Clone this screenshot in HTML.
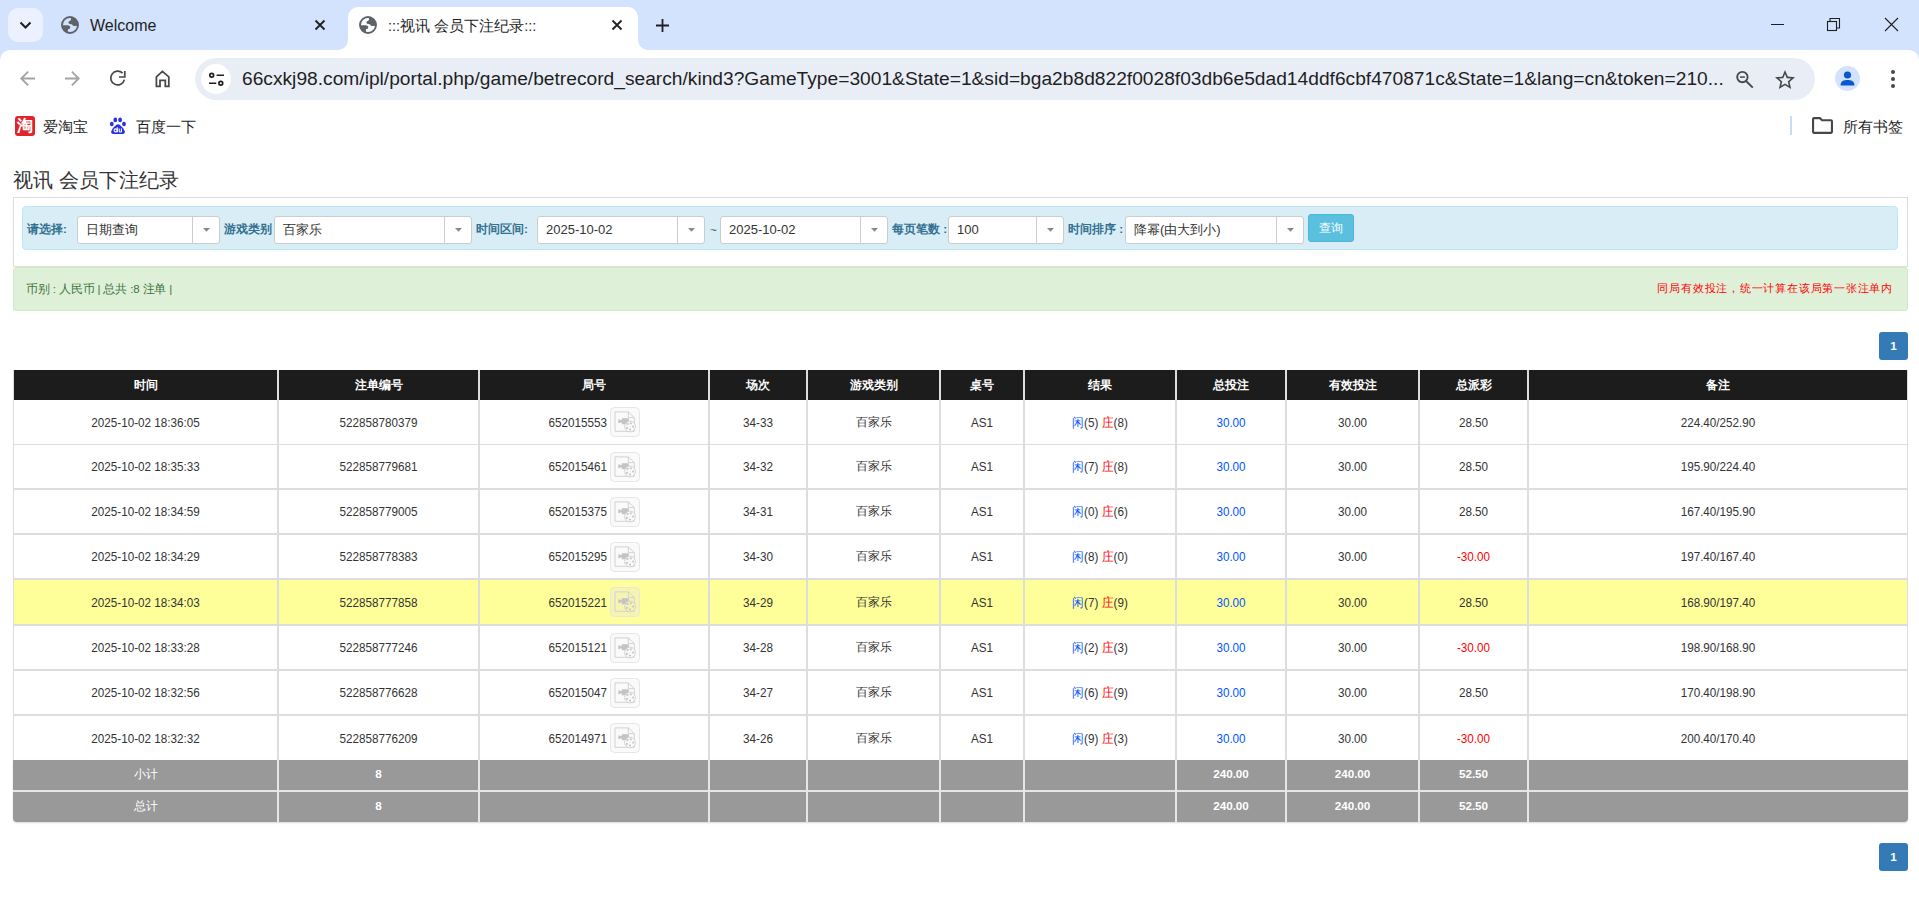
<!DOCTYPE html><html><head><meta charset="utf-8"><style>
*{box-sizing:border-box;margin:0;padding:0}
html,body{width:1919px;height:901px;overflow:hidden;background:#fff;font-family:'Liberation Sans',sans-serif;}
.a{position:absolute}
.t{position:absolute;white-space:nowrap;line-height:1}
svg{position:absolute;overflow:visible}
</style></head><body><div class="a" style="left:0;top:0;width:1919px;height:62px;background:#d3e3fd"></div>
<div class="a" style="left:8px;top:8px;width:35px;height:34px;border-radius:10px;background:#ebf1fe"></div>
<svg style="left:19px;top:18.5px" width="13" height="12" viewBox="0 0 13 12"><path d="M1.5 3.5l5 5 5-5" fill="none" stroke="#1f1f1f" stroke-width="2"/></svg>
<svg style="left:58px;top:13px" width="24" height="24" viewBox="0 0 24 24"><defs><clipPath id="gc61"><circle cx="12" cy="12" r="8.2"/></clipPath></defs><circle cx="12" cy="12" r="8" fill="none" stroke="#5f6368" stroke-width="1.9"/><g clip-path="url(#gc61)" fill="#5f6368"><path d="M13 2 L13 6.3 Q13 7.4 12 7.8 L11.2 8.2 Q10.3 8.7 10.5 9.8 Q10.8 10.9 12 11.1 L13.4 11.3 Q14.5 11.6 14.7 12.3 Q15 13.1 16.2 13 L22 12.6 L22 2 Z"/><path d="M2 12.1 L10 12.3 Q11.6 12.5 12.1 13.6 Q12.5 14.7 11.8 15.4 Q11.3 15.9 10.6 16 Q9.9 16.1 9.9 17.1 L9.9 22 L2 22 Z"/></g></svg>
<div class="t" style="left:90px;top:18px;font-size:16px;color:#1f1f1f">Welcome</div>
<svg style="left:315px;top:20px" width="10" height="10" viewBox="0 0 10 10"><path d="M0.5 0.5l9 9M9.5 0.5l-9 9" stroke="#1f1f1f" stroke-width="1.8"/></svg>
<div class="a" style="left:348px;top:7px;width:290px;height:43px;background:#fff;border-radius:10px 10px 0 0"></div>
<svg style="left:338px;top:40px" width="10" height="10" viewBox="0 0 10 10"><path d="M10 0 V10 H0 A10 10 0 0 0 10 0z" fill="#fff"/></svg>
<svg style="left:638px;top:40px" width="10" height="10" viewBox="0 0 10 10"><path d="M0 0 V10 H10 A10 10 0 0 1 0 0z" fill="#fff"/></svg>
<svg style="left:356px;top:13px" width="24" height="24" viewBox="0 0 24 24"><defs><clipPath id="gc359"><circle cx="12" cy="12" r="8.2"/></clipPath></defs><circle cx="12" cy="12" r="8" fill="none" stroke="#5f6368" stroke-width="1.9"/><g clip-path="url(#gc359)" fill="#5f6368"><path d="M13 2 L13 6.3 Q13 7.4 12 7.8 L11.2 8.2 Q10.3 8.7 10.5 9.8 Q10.8 10.9 12 11.1 L13.4 11.3 Q14.5 11.6 14.7 12.3 Q15 13.1 16.2 13 L22 12.6 L22 2 Z"/><path d="M2 12.1 L10 12.3 Q11.6 12.5 12.1 13.6 Q12.5 14.7 11.8 15.4 Q11.3 15.9 10.6 16 Q9.9 16.1 9.9 17.1 L9.9 22 L2 22 Z"/></g></svg>
<div class="t" style="left:388px;top:19px;font-size:14.6px;color:#1f1f1f">:::视讯 会员下注纪录:::</div>
<svg style="left:612px;top:20px" width="10" height="10" viewBox="0 0 10 10"><path d="M0.5 0.5l9 9M9.5 0.5l-9 9" stroke="#1f1f1f" stroke-width="1.8"/></svg>
<svg style="left:656px;top:19px" width="13" height="13" viewBox="0 0 13 13"><path d="M6.5 0v13M0 6.5h13" stroke="#1f1f1f" stroke-width="1.8"/></svg>
<div class="a" style="left:1771px;top:24px;width:13px;height:1px;background:#1f1f1f"></div>
<svg style="left:1827px;top:18px" width="13" height="13" viewBox="0 0 13 13"><rect x="0.5" y="3.5" width="9" height="9" fill="none" stroke="#1f1f1f" stroke-width="1.1"/><path d="M3 3.5V0.5H12.5V10H9.5" fill="none" stroke="#1f1f1f" stroke-width="1.1"/></svg>
<svg style="left:1885px;top:18px" width="13" height="13" viewBox="0 0 13 13"><path d="M0 0l13 13M13 0l-13 13" stroke="#1f1f1f" stroke-width="1.1"/></svg>
<div class="a" style="left:0;top:50px;width:1919px;height:57px;background:#fff;border-radius:10px 10px 0 0"></div>
<svg style="left:20px;top:71.4px" width="15" height="15" viewBox="4 4 16 16"><path fill="#a3a3a3" d="M20 11H7.83l5.59-5.59L12 4l-8 8 8 8 1.41-1.41L7.83 13H20v-2z"/></svg>
<svg style="left:65px;top:71.4px" width="15" height="15" viewBox="4 4 16 16"><path fill="#a3a3a3" d="M12 4l-1.41 1.41L16.17 11H4v2h12.17l-5.58 5.59L12 20l8-8z"/></svg>
<svg style="left:100px;top:62px" width="40" height="34" viewBox="100 62 40 34"><path d="M124.4 79.6 A6.9 6.9 0 1 1 122.6 73.2" fill="none" stroke="#474747" stroke-width="1.7"/><path d="M124.8 71 V77 H119" fill="none" stroke="#474747" stroke-width="1.7"/></svg>
<svg style="left:140px;top:62px" width="40" height="34" viewBox="140 62 40 34"><path d="M156.4 86.3 V76.8 L162.4 71.4 L168.8 76.8 V86.3 H165.3 V80.4 H160 V86.3 Z" fill="none" stroke="#474747" stroke-width="1.75" stroke-linejoin="miter"/></svg>
<div class="a" style="left:195px;top:58px;width:1620px;height:42px;border-radius:21px;background:#e9eef6"></div>
<div class="a" style="left:201px;top:64px;width:30px;height:30px;border-radius:15px;background:#fff"></div>
<svg style="left:200px;top:62px" width="40" height="34" viewBox="200 62 40 34"><circle cx="211.7" cy="75.3" r="1.9" fill="none" stroke="#1f1f1f" stroke-width="1.7"/><path d="M216.6 75.3H224M209 83.3H216.3" stroke="#1f1f1f" stroke-width="1.6"/><circle cx="220.8" cy="83.3" r="1.9" fill="none" stroke="#1f1f1f" stroke-width="1.7"/></svg>
<div class="t" style="left:242px;top:69px;font-size:19.2px;color:#1f1f1f">66cxkj98.com/ipl/portal.php/game/betrecord_search/kind3?GameType=3001&amp;State=1&amp;sid=bga2b8d822f0028f03db6e5dad14ddf6cbf470871c&amp;State=1&amp;lang=cn&amp;token=210...</div>
<svg style="left:1728px;top:64px" width="30" height="30" viewBox="1728 64 30 30"><circle cx="1742.4" cy="77.1" r="5.2" fill="none" stroke="#474747" stroke-width="1.9"/><path d="M1740 77.1H1744.9" stroke="#474747" stroke-width="1.5"/><path d="M1746.3 81.3L1752.8 87.6" stroke="#474747" stroke-width="1.9"/></svg>
<svg style="left:1772.9px;top:68px" width="24" height="24" viewBox="0 0 24 24"><path fill="#474747" d="M22 9.24l-7.19-.62L12 2 9.19 8.63 2 9.24l5.46 4.73L5.82 21 12 17.27 18.18 21l-1.63-7.03L22 9.24zM12 15.4l-3.76 2.27 1-4.28-3.32-2.88 4.38-.38L12 6.1l1.71 4.04 4.38.38-3.32 2.88 1 4.28L12 15.4z"/></svg>
<div class="a" style="left:1835px;top:66px;width:25px;height:25px;border-radius:13px;background:#d3e3fd"></div>
<svg style="left:1839px;top:70px" width="17" height="17" viewBox="0 0 17 17"><circle cx="8.5" cy="5" r="3.6" fill="#0b57d0"/><path d="M1.5 15.5 C1.5 11 5 10 8.5 10 C12 10 15.5 11 15.5 15.5 Z" fill="#0b57d0"/></svg>
<div class="a" style="left:1890.5px;top:70px;width:4px;height:4px;border-radius:2px;background:#474747"></div>
<div class="a" style="left:1890.5px;top:76.7px;width:4px;height:4px;border-radius:2px;background:#474747"></div>
<div class="a" style="left:1890.5px;top:83.6px;width:4px;height:4px;border-radius:2px;background:#474747"></div>
<div class="a" style="left:15px;top:116px;width:20px;height:20px;border-radius:3px;background:#e0242b"></div>
<div class="t" style="left:16px;top:118px;width:18px;text-align:center;font-size:16px;font-weight:bold;color:#fff">淘</div>
<div class="t" style="left:43px;top:120px;font-size:14.5px;color:#1f1f1f">爱淘宝</div>
<svg style="left:104px;top:112px" width="28" height="28" viewBox="0 0 28 28"><g fill="#2932e1"><ellipse cx="11.3" cy="7.9" rx="1.9" ry="2.3"/><ellipse cx="16.1" cy="7.9" rx="1.9" ry="2.3"/><ellipse cx="7.8" cy="12" rx="1.9" ry="2.2"/><ellipse cx="20" cy="12" rx="1.9" ry="2.2"/><path d="M7.2 19.6 Q6.8 21.9 9.4 21.9 L18.6 21.9 Q21.2 21.9 20.8 19.6 Q19.2 15.2 15.6 12.8 Q14 11.9 12.4 12.8 Q8.8 15.2 7.2 19.6Z"/></g><g fill="none" stroke="#fff" stroke-width="1.1"><circle cx="11.6" cy="18.4" r="1.5"/><path d="M13.3 15.3V20.2M15.2 16.6V18.9Q15.2 20 16.3 20Q17.4 20 17.4 18.9V16.6M17.4 18.5V20.2"/></g></svg>
<div class="t" style="left:136px;top:120px;font-size:14.5px;color:#1f1f1f">百度一下</div>
<div class="a" style="left:1790px;top:116px;width:2px;height:19px;background:#c9dbfb"></div>
<svg style="left:1812px;top:117px" width="21" height="17" viewBox="2 4 20 16"><path fill="#474747" d="M9.17 6l2 2H20v10H4V6h5.17M10 4H4c-1.1 0-1.99.9-1.99 2L2 18c0 1.1.9 2 2 2h16c1.1 0 2-.9 2-2V8c0-1.1-.9-2-2-2h-8l-2-2z"/></svg>
<div class="t" style="left:1843px;top:120px;font-size:14.5px;color:#1f1f1f">所有书签</div>
<div class="t" style="left:13px;top:169.5px;font-size:20px;color:#333">视讯 会员下注纪录</div>
<div class="a" style="left:13px;top:197px;width:1895px;height:70px;border:1px solid #ddd;background:#fff"></div>
<div class="a" style="left:22px;top:206px;width:1876px;height:44px;border:1px solid #bce8f1;border-radius:4px;background:#d9edf7"></div>
<div class="t" style="left:27px;top:223px;color:#31708f;font-weight:bold;font-size:11.7px;">请选择:</div>
<div class="a" style="left:77px;top:216px;width:143px;height:28px;border:1px solid #ccc;border-radius:3px;background:#fff"></div>
<div class="a" style="left:192px;top:217px;width:1px;height:26px;background:#ccc"></div>
<div class="t" style="left:86px;top:223px;font-size:13px;color:#333">日期查询</div>
<svg style="left:202.5px;top:228px" width="7" height="5" viewBox="0 0 7 5"><path d="M0 0h7L3.5 3.8z" fill="#888"/></svg>
<div class="t" style="left:224px;top:223px;color:#31708f;font-weight:bold;font-size:11.7px;">游戏类别</div>
<div class="a" style="left:274px;top:216px;width:198px;height:28px;border:1px solid #ccc;border-radius:3px;background:#fff"></div>
<div class="a" style="left:444px;top:217px;width:1px;height:26px;background:#ccc"></div>
<div class="t" style="left:283px;top:223px;font-size:13px;color:#333">百家乐</div>
<svg style="left:454.5px;top:228px" width="7" height="5" viewBox="0 0 7 5"><path d="M0 0h7L3.5 3.8z" fill="#888"/></svg>
<div class="t" style="left:476px;top:223px;color:#31708f;font-weight:bold;font-size:11.7px;">时间区间:</div>
<div class="a" style="left:537px;top:216px;width:168px;height:28px;border:1px solid #ccc;border-radius:3px;background:#fff"></div>
<div class="a" style="left:677px;top:217px;width:1px;height:26px;background:#ccc"></div>
<div class="t" style="left:546px;top:223px;font-size:13px;color:#333">2025-10-02</div>
<svg style="left:687.5px;top:228px" width="7" height="5" viewBox="0 0 7 5"><path d="M0 0h7L3.5 3.8z" fill="#888"/></svg>
<div class="t" style="left:710px;top:224px;font-size:11.7px;color:#555">~</div>
<div class="a" style="left:720px;top:216px;width:168px;height:28px;border:1px solid #ccc;border-radius:3px;background:#fff"></div>
<div class="a" style="left:860px;top:217px;width:1px;height:26px;background:#ccc"></div>
<div class="t" style="left:729px;top:223px;font-size:13px;color:#333">2025-10-02</div>
<svg style="left:870.5px;top:228px" width="7" height="5" viewBox="0 0 7 5"><path d="M0 0h7L3.5 3.8z" fill="#888"/></svg>
<div class="t" style="left:892px;top:223px;color:#31708f;font-weight:bold;font-size:11.7px;">每页笔数 :</div>
<div class="a" style="left:948px;top:216px;width:116px;height:28px;border:1px solid #ccc;border-radius:3px;background:#fff"></div>
<div class="a" style="left:1036px;top:217px;width:1px;height:26px;background:#ccc"></div>
<div class="t" style="left:957px;top:223px;font-size:13px;color:#333">100</div>
<svg style="left:1046.5px;top:228px" width="7" height="5" viewBox="0 0 7 5"><path d="M0 0h7L3.5 3.8z" fill="#888"/></svg>
<div class="t" style="left:1068px;top:223px;color:#31708f;font-weight:bold;font-size:11.7px;">时间排序 :</div>
<div class="a" style="left:1125px;top:216px;width:179px;height:28px;border:1px solid #ccc;border-radius:3px;background:#fff"></div>
<div class="a" style="left:1276px;top:217px;width:1px;height:26px;background:#ccc"></div>
<div class="t" style="left:1134px;top:223px;font-size:13px;color:#333">降幂(由大到小)</div>
<svg style="left:1286.5px;top:228px" width="7" height="5" viewBox="0 0 7 5"><path d="M0 0h7L3.5 3.8z" fill="#888"/></svg>
<div class="a" style="left:1308px;top:214px;width:46px;height:28px;border:1px solid #46b8da;border-radius:3px;background:#5bc0de"></div>
<div class="t" style="left:1319px;top:222px;font-size:11.7px;color:#fff">查询</div>
<div class="a" style="left:13px;top:267px;width:1895px;height:44px;border:1px solid #d6e9c6;border-radius:3px;background:#dff0d8"></div>
<div class="t" style="left:26px;top:284px;font-size:11.5px;letter-spacing:-0.14px;color:#3c763d">币别 : 人民币 | 总共 :8 注单 |</div>
<div class="t" style="right:26px;top:283px;font-size:11px;letter-spacing:0.78px;color:#ff0000">同局有效投注，统一计算在该局第一张注单内</div>
<div class="a" style="left:1879px;top:332px;width:29px;height:28px;border-radius:3px;background:#337ab7"></div>
<div class="t" style="left:1879px;top:340px;width:29px;text-align:center;font-size:11.7px;font-weight:bold;color:#fff">1</div>
<div class="a" style="left:1879px;top:843px;width:29px;height:28px;border-radius:3px;background:#337ab7"></div>
<div class="t" style="left:1879px;top:851px;width:29px;text-align:center;font-size:11.7px;font-weight:bold;color:#fff">1</div>
<div class="a" style="left:13px;top:370px;width:1895px;height:390px;background:#ddd"></div>
<div class="a" style="left:14px;top:370px;width:263px;height:30px;background:#1c1c1c"></div>
<div class="t" style="left:14px;top:379px;width:263px;text-align:center;font-size:11.7px;font-weight:bold;color:#fff">时间</div>
<div class="a" style="left:279px;top:370px;width:199px;height:30px;background:#1c1c1c"></div>
<div class="t" style="left:279px;top:379px;width:199px;text-align:center;font-size:11.7px;font-weight:bold;color:#fff">注单编号</div>
<div class="a" style="left:480px;top:370px;width:228px;height:30px;background:#1c1c1c"></div>
<div class="t" style="left:480px;top:379px;width:228px;text-align:center;font-size:11.7px;font-weight:bold;color:#fff">局号</div>
<div class="a" style="left:710px;top:370px;width:96px;height:30px;background:#1c1c1c"></div>
<div class="t" style="left:710px;top:379px;width:96px;text-align:center;font-size:11.7px;font-weight:bold;color:#fff">场次</div>
<div class="a" style="left:808px;top:370px;width:131px;height:30px;background:#1c1c1c"></div>
<div class="t" style="left:808px;top:379px;width:131px;text-align:center;font-size:11.7px;font-weight:bold;color:#fff">游戏类别</div>
<div class="a" style="left:941px;top:370px;width:82px;height:30px;background:#1c1c1c"></div>
<div class="t" style="left:941px;top:379px;width:82px;text-align:center;font-size:11.7px;font-weight:bold;color:#fff">桌号</div>
<div class="a" style="left:1025px;top:370px;width:150px;height:30px;background:#1c1c1c"></div>
<div class="t" style="left:1025px;top:379px;width:150px;text-align:center;font-size:11.7px;font-weight:bold;color:#fff">结果</div>
<div class="a" style="left:1177px;top:370px;width:108px;height:30px;background:#1c1c1c"></div>
<div class="t" style="left:1177px;top:379px;width:108px;text-align:center;font-size:11.7px;font-weight:bold;color:#fff">总投注</div>
<div class="a" style="left:1287px;top:370px;width:131px;height:30px;background:#1c1c1c"></div>
<div class="t" style="left:1287px;top:379px;width:131px;text-align:center;font-size:11.7px;font-weight:bold;color:#fff">有效投注</div>
<div class="a" style="left:1420px;top:370px;width:107px;height:30px;background:#1c1c1c"></div>
<div class="t" style="left:1420px;top:379px;width:107px;text-align:center;font-size:11.7px;font-weight:bold;color:#fff">总派彩</div>
<div class="a" style="left:1529px;top:370px;width:378px;height:30px;background:#1c1c1c"></div>
<div class="t" style="left:1529px;top:379px;width:378px;text-align:center;font-size:11.7px;font-weight:bold;color:#fff">备注</div>
<div class="a" style="left:14px;top:400px;width:263px;height:44px;background:#fff"></div>
<div class="t" style="left:14px;top:415.5px;width:263px;text-align:center;font-size:11.7px;transform:translateY(0.4px) scaleY(1.12);transform-origin:50% 60%;color:#333">2025-10-02 18:36:05</div>
<div class="a" style="left:279px;top:400px;width:199px;height:44px;background:#fff"></div>
<div class="t" style="left:279px;top:415.5px;width:199px;text-align:center;font-size:11.7px;transform:translateY(0.4px) scaleY(1.12);transform-origin:50% 60%;color:#333">522858780379</div>
<div class="a" style="left:480px;top:400px;width:228px;height:44px;background:#fff"></div>
<div class="t" style="left:480px;width:127px;text-align:right;top:415.5px;font-size:11.7px;transform:translateY(0.4px) scaleY(1.12);transform-origin:50% 60%;color:#333">652015553</div>
<svg style="left:610px;top:407px" width="30" height="30" viewBox="0 0 30 30"><rect x="0.5" y="0.5" width="29" height="29" rx="4" fill="#fafafa" stroke="#e6e6e6"/><path d="M5 4.9H18.3L24.3 10.6V24.3H5Z" fill="none" stroke="#d2d2d2" stroke-width="1"/><path d="M18.3 4.9V10.6H24.3" fill="none" stroke="#d2d2d2" stroke-width="1"/><path d="M8.3 12.3L11.8 13.2V11.3H18.8V17.3H11.8V15.3L8.3 16.3Z" fill="#c4c4c4"/><circle cx="20" cy="19.5" r="5.4" fill="#fafafa" stroke="#cfcfcf" stroke-width="0.9"/><g fill="#c8c8c8"><circle cx="17.5" cy="17" r="1.15"/><circle cx="20.8" cy="16.3" r="1.15"/><circle cx="23.1" cy="19.6" r="1.15"/><circle cx="16.9" cy="21" r="1.15"/><circle cx="20" cy="22.6" r="1.15"/><circle cx="20" cy="19.5" r="0.4"/></g></svg>
<div class="a" style="left:710px;top:400px;width:96px;height:44px;background:#fff"></div>
<div class="t" style="left:710px;top:415.5px;width:96px;text-align:center;font-size:11.7px;transform:translateY(0.4px) scaleY(1.12);transform-origin:50% 60%;color:#333">34-33</div>
<div class="a" style="left:808px;top:400px;width:131px;height:44px;background:#fff"></div>
<div class="t" style="left:808px;top:415.5px;width:131px;text-align:center;font-size:11.7px;color:#333">百家乐</div>
<div class="a" style="left:941px;top:400px;width:82px;height:44px;background:#fff"></div>
<div class="t" style="left:941px;top:415.5px;width:82px;text-align:center;font-size:11.7px;transform:translateY(0.4px) scaleY(1.12);transform-origin:50% 60%;color:#333">AS1</div>
<div class="a" style="left:1025px;top:400px;width:150px;height:44px;background:#fff"></div>
<div class="t" style="left:1025px;top:415.5px;width:150px;text-align:center;font-size:11.7px;transform:translateY(0.4px) scaleY(1.12);transform-origin:50% 60%;color:#333"><span style="color:#0055ff">闲</span>(5) <span style="color:#ff0000">庄</span>(8)</div>
<div class="a" style="left:1177px;top:400px;width:108px;height:44px;background:#fff"></div>
<div class="t" style="left:1177px;top:415.5px;width:108px;text-align:center;font-size:11.7px;transform:translateY(0.4px) scaleY(1.12);transform-origin:50% 60%;color:#0055ff">30.00</div>
<div class="a" style="left:1287px;top:400px;width:131px;height:44px;background:#fff"></div>
<div class="t" style="left:1287px;top:415.5px;width:131px;text-align:center;font-size:11.7px;transform:translateY(0.4px) scaleY(1.12);transform-origin:50% 60%;color:#333">30.00</div>
<div class="a" style="left:1420px;top:400px;width:107px;height:44px;background:#fff"></div>
<div class="t" style="left:1420px;top:415.5px;width:107px;text-align:center;font-size:11.7px;transform:translateY(0.4px) scaleY(1.12);transform-origin:50% 60%;color:#333">28.50</div>
<div class="a" style="left:1529px;top:400px;width:378px;height:44px;background:#fff"></div>
<div class="t" style="left:1529px;top:415.5px;width:378px;text-align:center;font-size:11.7px;transform:translateY(0.4px) scaleY(1.12);transform-origin:50% 60%;color:#333">224.40/252.90</div>
<div class="a" style="left:14px;top:445px;width:263px;height:43px;background:#fff"></div>
<div class="t" style="left:14px;top:460.0px;width:263px;text-align:center;font-size:11.7px;transform:translateY(0.4px) scaleY(1.12);transform-origin:50% 60%;color:#333">2025-10-02 18:35:33</div>
<div class="a" style="left:279px;top:445px;width:199px;height:43px;background:#fff"></div>
<div class="t" style="left:279px;top:460.0px;width:199px;text-align:center;font-size:11.7px;transform:translateY(0.4px) scaleY(1.12);transform-origin:50% 60%;color:#333">522858779681</div>
<div class="a" style="left:480px;top:445px;width:228px;height:43px;background:#fff"></div>
<div class="t" style="left:480px;width:127px;text-align:right;top:460.0px;font-size:11.7px;transform:translateY(0.4px) scaleY(1.12);transform-origin:50% 60%;color:#333">652015461</div>
<svg style="left:610px;top:452px" width="30" height="30" viewBox="0 0 30 30"><rect x="0.5" y="0.5" width="29" height="29" rx="4" fill="#fafafa" stroke="#e6e6e6"/><path d="M5 4.9H18.3L24.3 10.6V24.3H5Z" fill="none" stroke="#d2d2d2" stroke-width="1"/><path d="M18.3 4.9V10.6H24.3" fill="none" stroke="#d2d2d2" stroke-width="1"/><path d="M8.3 12.3L11.8 13.2V11.3H18.8V17.3H11.8V15.3L8.3 16.3Z" fill="#c4c4c4"/><circle cx="20" cy="19.5" r="5.4" fill="#fafafa" stroke="#cfcfcf" stroke-width="0.9"/><g fill="#c8c8c8"><circle cx="17.5" cy="17" r="1.15"/><circle cx="20.8" cy="16.3" r="1.15"/><circle cx="23.1" cy="19.6" r="1.15"/><circle cx="16.9" cy="21" r="1.15"/><circle cx="20" cy="22.6" r="1.15"/><circle cx="20" cy="19.5" r="0.4"/></g></svg>
<div class="a" style="left:710px;top:445px;width:96px;height:43px;background:#fff"></div>
<div class="t" style="left:710px;top:460.0px;width:96px;text-align:center;font-size:11.7px;transform:translateY(0.4px) scaleY(1.12);transform-origin:50% 60%;color:#333">34-32</div>
<div class="a" style="left:808px;top:445px;width:131px;height:43px;background:#fff"></div>
<div class="t" style="left:808px;top:460.0px;width:131px;text-align:center;font-size:11.7px;color:#333">百家乐</div>
<div class="a" style="left:941px;top:445px;width:82px;height:43px;background:#fff"></div>
<div class="t" style="left:941px;top:460.0px;width:82px;text-align:center;font-size:11.7px;transform:translateY(0.4px) scaleY(1.12);transform-origin:50% 60%;color:#333">AS1</div>
<div class="a" style="left:1025px;top:445px;width:150px;height:43px;background:#fff"></div>
<div class="t" style="left:1025px;top:460.0px;width:150px;text-align:center;font-size:11.7px;transform:translateY(0.4px) scaleY(1.12);transform-origin:50% 60%;color:#333"><span style="color:#0055ff">闲</span>(7) <span style="color:#ff0000">庄</span>(8)</div>
<div class="a" style="left:1177px;top:445px;width:108px;height:43px;background:#fff"></div>
<div class="t" style="left:1177px;top:460.0px;width:108px;text-align:center;font-size:11.7px;transform:translateY(0.4px) scaleY(1.12);transform-origin:50% 60%;color:#0055ff">30.00</div>
<div class="a" style="left:1287px;top:445px;width:131px;height:43px;background:#fff"></div>
<div class="t" style="left:1287px;top:460.0px;width:131px;text-align:center;font-size:11.7px;transform:translateY(0.4px) scaleY(1.12);transform-origin:50% 60%;color:#333">30.00</div>
<div class="a" style="left:1420px;top:445px;width:107px;height:43px;background:#fff"></div>
<div class="t" style="left:1420px;top:460.0px;width:107px;text-align:center;font-size:11.7px;transform:translateY(0.4px) scaleY(1.12);transform-origin:50% 60%;color:#333">28.50</div>
<div class="a" style="left:1529px;top:445px;width:378px;height:43px;background:#fff"></div>
<div class="t" style="left:1529px;top:460.0px;width:378px;text-align:center;font-size:11.7px;transform:translateY(0.4px) scaleY(1.12);transform-origin:50% 60%;color:#333">195.90/224.40</div>
<div class="a" style="left:14px;top:490px;width:263px;height:43px;background:#fff"></div>
<div class="t" style="left:14px;top:505.0px;width:263px;text-align:center;font-size:11.7px;transform:translateY(0.4px) scaleY(1.12);transform-origin:50% 60%;color:#333">2025-10-02 18:34:59</div>
<div class="a" style="left:279px;top:490px;width:199px;height:43px;background:#fff"></div>
<div class="t" style="left:279px;top:505.0px;width:199px;text-align:center;font-size:11.7px;transform:translateY(0.4px) scaleY(1.12);transform-origin:50% 60%;color:#333">522858779005</div>
<div class="a" style="left:480px;top:490px;width:228px;height:43px;background:#fff"></div>
<div class="t" style="left:480px;width:127px;text-align:right;top:505.0px;font-size:11.7px;transform:translateY(0.4px) scaleY(1.12);transform-origin:50% 60%;color:#333">652015375</div>
<svg style="left:610px;top:497px" width="30" height="30" viewBox="0 0 30 30"><rect x="0.5" y="0.5" width="29" height="29" rx="4" fill="#fafafa" stroke="#e6e6e6"/><path d="M5 4.9H18.3L24.3 10.6V24.3H5Z" fill="none" stroke="#d2d2d2" stroke-width="1"/><path d="M18.3 4.9V10.6H24.3" fill="none" stroke="#d2d2d2" stroke-width="1"/><path d="M8.3 12.3L11.8 13.2V11.3H18.8V17.3H11.8V15.3L8.3 16.3Z" fill="#c4c4c4"/><circle cx="20" cy="19.5" r="5.4" fill="#fafafa" stroke="#cfcfcf" stroke-width="0.9"/><g fill="#c8c8c8"><circle cx="17.5" cy="17" r="1.15"/><circle cx="20.8" cy="16.3" r="1.15"/><circle cx="23.1" cy="19.6" r="1.15"/><circle cx="16.9" cy="21" r="1.15"/><circle cx="20" cy="22.6" r="1.15"/><circle cx="20" cy="19.5" r="0.4"/></g></svg>
<div class="a" style="left:710px;top:490px;width:96px;height:43px;background:#fff"></div>
<div class="t" style="left:710px;top:505.0px;width:96px;text-align:center;font-size:11.7px;transform:translateY(0.4px) scaleY(1.12);transform-origin:50% 60%;color:#333">34-31</div>
<div class="a" style="left:808px;top:490px;width:131px;height:43px;background:#fff"></div>
<div class="t" style="left:808px;top:505.0px;width:131px;text-align:center;font-size:11.7px;color:#333">百家乐</div>
<div class="a" style="left:941px;top:490px;width:82px;height:43px;background:#fff"></div>
<div class="t" style="left:941px;top:505.0px;width:82px;text-align:center;font-size:11.7px;transform:translateY(0.4px) scaleY(1.12);transform-origin:50% 60%;color:#333">AS1</div>
<div class="a" style="left:1025px;top:490px;width:150px;height:43px;background:#fff"></div>
<div class="t" style="left:1025px;top:505.0px;width:150px;text-align:center;font-size:11.7px;transform:translateY(0.4px) scaleY(1.12);transform-origin:50% 60%;color:#333"><span style="color:#0055ff">闲</span>(0) <span style="color:#ff0000">庄</span>(6)</div>
<div class="a" style="left:1177px;top:490px;width:108px;height:43px;background:#fff"></div>
<div class="t" style="left:1177px;top:505.0px;width:108px;text-align:center;font-size:11.7px;transform:translateY(0.4px) scaleY(1.12);transform-origin:50% 60%;color:#0055ff">30.00</div>
<div class="a" style="left:1287px;top:490px;width:131px;height:43px;background:#fff"></div>
<div class="t" style="left:1287px;top:505.0px;width:131px;text-align:center;font-size:11.7px;transform:translateY(0.4px) scaleY(1.12);transform-origin:50% 60%;color:#333">30.00</div>
<div class="a" style="left:1420px;top:490px;width:107px;height:43px;background:#fff"></div>
<div class="t" style="left:1420px;top:505.0px;width:107px;text-align:center;font-size:11.7px;transform:translateY(0.4px) scaleY(1.12);transform-origin:50% 60%;color:#333">28.50</div>
<div class="a" style="left:1529px;top:490px;width:378px;height:43px;background:#fff"></div>
<div class="t" style="left:1529px;top:505.0px;width:378px;text-align:center;font-size:11.7px;transform:translateY(0.4px) scaleY(1.12);transform-origin:50% 60%;color:#333">167.40/195.90</div>
<div class="a" style="left:14px;top:535px;width:263px;height:43px;background:#fff"></div>
<div class="t" style="left:14px;top:550.0px;width:263px;text-align:center;font-size:11.7px;transform:translateY(0.4px) scaleY(1.12);transform-origin:50% 60%;color:#333">2025-10-02 18:34:29</div>
<div class="a" style="left:279px;top:535px;width:199px;height:43px;background:#fff"></div>
<div class="t" style="left:279px;top:550.0px;width:199px;text-align:center;font-size:11.7px;transform:translateY(0.4px) scaleY(1.12);transform-origin:50% 60%;color:#333">522858778383</div>
<div class="a" style="left:480px;top:535px;width:228px;height:43px;background:#fff"></div>
<div class="t" style="left:480px;width:127px;text-align:right;top:550.0px;font-size:11.7px;transform:translateY(0.4px) scaleY(1.12);transform-origin:50% 60%;color:#333">652015295</div>
<svg style="left:610px;top:542px" width="30" height="30" viewBox="0 0 30 30"><rect x="0.5" y="0.5" width="29" height="29" rx="4" fill="#fafafa" stroke="#e6e6e6"/><path d="M5 4.9H18.3L24.3 10.6V24.3H5Z" fill="none" stroke="#d2d2d2" stroke-width="1"/><path d="M18.3 4.9V10.6H24.3" fill="none" stroke="#d2d2d2" stroke-width="1"/><path d="M8.3 12.3L11.8 13.2V11.3H18.8V17.3H11.8V15.3L8.3 16.3Z" fill="#c4c4c4"/><circle cx="20" cy="19.5" r="5.4" fill="#fafafa" stroke="#cfcfcf" stroke-width="0.9"/><g fill="#c8c8c8"><circle cx="17.5" cy="17" r="1.15"/><circle cx="20.8" cy="16.3" r="1.15"/><circle cx="23.1" cy="19.6" r="1.15"/><circle cx="16.9" cy="21" r="1.15"/><circle cx="20" cy="22.6" r="1.15"/><circle cx="20" cy="19.5" r="0.4"/></g></svg>
<div class="a" style="left:710px;top:535px;width:96px;height:43px;background:#fff"></div>
<div class="t" style="left:710px;top:550.0px;width:96px;text-align:center;font-size:11.7px;transform:translateY(0.4px) scaleY(1.12);transform-origin:50% 60%;color:#333">34-30</div>
<div class="a" style="left:808px;top:535px;width:131px;height:43px;background:#fff"></div>
<div class="t" style="left:808px;top:550.0px;width:131px;text-align:center;font-size:11.7px;color:#333">百家乐</div>
<div class="a" style="left:941px;top:535px;width:82px;height:43px;background:#fff"></div>
<div class="t" style="left:941px;top:550.0px;width:82px;text-align:center;font-size:11.7px;transform:translateY(0.4px) scaleY(1.12);transform-origin:50% 60%;color:#333">AS1</div>
<div class="a" style="left:1025px;top:535px;width:150px;height:43px;background:#fff"></div>
<div class="t" style="left:1025px;top:550.0px;width:150px;text-align:center;font-size:11.7px;transform:translateY(0.4px) scaleY(1.12);transform-origin:50% 60%;color:#333"><span style="color:#0055ff">闲</span>(8) <span style="color:#ff0000">庄</span>(0)</div>
<div class="a" style="left:1177px;top:535px;width:108px;height:43px;background:#fff"></div>
<div class="t" style="left:1177px;top:550.0px;width:108px;text-align:center;font-size:11.7px;transform:translateY(0.4px) scaleY(1.12);transform-origin:50% 60%;color:#0055ff">30.00</div>
<div class="a" style="left:1287px;top:535px;width:131px;height:43px;background:#fff"></div>
<div class="t" style="left:1287px;top:550.0px;width:131px;text-align:center;font-size:11.7px;transform:translateY(0.4px) scaleY(1.12);transform-origin:50% 60%;color:#333">30.00</div>
<div class="a" style="left:1420px;top:535px;width:107px;height:43px;background:#fff"></div>
<div class="t" style="left:1420px;top:550.0px;width:107px;text-align:center;font-size:11.7px;transform:translateY(0.4px) scaleY(1.12);transform-origin:50% 60%;color:#ff0000">-30.00</div>
<div class="a" style="left:1529px;top:535px;width:378px;height:43px;background:#fff"></div>
<div class="t" style="left:1529px;top:550.0px;width:378px;text-align:center;font-size:11.7px;transform:translateY(0.4px) scaleY(1.12);transform-origin:50% 60%;color:#333">197.40/167.40</div>
<div class="a" style="left:14px;top:580px;width:263px;height:44px;background:#ffff99"></div>
<div class="t" style="left:14px;top:595.5px;width:263px;text-align:center;font-size:11.7px;transform:translateY(0.4px) scaleY(1.12);transform-origin:50% 60%;color:#333">2025-10-02 18:34:03</div>
<div class="a" style="left:279px;top:580px;width:199px;height:44px;background:#ffff99"></div>
<div class="t" style="left:279px;top:595.5px;width:199px;text-align:center;font-size:11.7px;transform:translateY(0.4px) scaleY(1.12);transform-origin:50% 60%;color:#333">522858777858</div>
<div class="a" style="left:480px;top:580px;width:228px;height:44px;background:#ffff99"></div>
<div class="t" style="left:480px;width:127px;text-align:right;top:595.5px;font-size:11.7px;transform:translateY(0.4px) scaleY(1.12);transform-origin:50% 60%;color:#333">652015221</div>
<svg style="left:610px;top:587px" width="30" height="30" viewBox="0 0 30 30"><rect x="0.5" y="0.5" width="29" height="29" rx="4" fill="#f7f3b0" stroke="#e6e6e6"/><path d="M5 4.9H18.3L24.3 10.6V24.3H5Z" fill="none" stroke="#d2d2d2" stroke-width="1"/><path d="M18.3 4.9V10.6H24.3" fill="none" stroke="#d2d2d2" stroke-width="1"/><path d="M8.3 12.3L11.8 13.2V11.3H18.8V17.3H11.8V15.3L8.3 16.3Z" fill="#c4c4c4"/><circle cx="20" cy="19.5" r="5.4" fill="#f7f3b0" stroke="#cfcfcf" stroke-width="0.9"/><g fill="#c8c8c8"><circle cx="17.5" cy="17" r="1.15"/><circle cx="20.8" cy="16.3" r="1.15"/><circle cx="23.1" cy="19.6" r="1.15"/><circle cx="16.9" cy="21" r="1.15"/><circle cx="20" cy="22.6" r="1.15"/><circle cx="20" cy="19.5" r="0.4"/></g></svg>
<div class="a" style="left:710px;top:580px;width:96px;height:44px;background:#ffff99"></div>
<div class="t" style="left:710px;top:595.5px;width:96px;text-align:center;font-size:11.7px;transform:translateY(0.4px) scaleY(1.12);transform-origin:50% 60%;color:#333">34-29</div>
<div class="a" style="left:808px;top:580px;width:131px;height:44px;background:#ffff99"></div>
<div class="t" style="left:808px;top:595.5px;width:131px;text-align:center;font-size:11.7px;color:#333">百家乐</div>
<div class="a" style="left:941px;top:580px;width:82px;height:44px;background:#ffff99"></div>
<div class="t" style="left:941px;top:595.5px;width:82px;text-align:center;font-size:11.7px;transform:translateY(0.4px) scaleY(1.12);transform-origin:50% 60%;color:#333">AS1</div>
<div class="a" style="left:1025px;top:580px;width:150px;height:44px;background:#ffff99"></div>
<div class="t" style="left:1025px;top:595.5px;width:150px;text-align:center;font-size:11.7px;transform:translateY(0.4px) scaleY(1.12);transform-origin:50% 60%;color:#333"><span style="color:#0055ff">闲</span>(7) <span style="color:#ff0000">庄</span>(9)</div>
<div class="a" style="left:1177px;top:580px;width:108px;height:44px;background:#ffff99"></div>
<div class="t" style="left:1177px;top:595.5px;width:108px;text-align:center;font-size:11.7px;transform:translateY(0.4px) scaleY(1.12);transform-origin:50% 60%;color:#0055ff">30.00</div>
<div class="a" style="left:1287px;top:580px;width:131px;height:44px;background:#ffff99"></div>
<div class="t" style="left:1287px;top:595.5px;width:131px;text-align:center;font-size:11.7px;transform:translateY(0.4px) scaleY(1.12);transform-origin:50% 60%;color:#333">30.00</div>
<div class="a" style="left:1420px;top:580px;width:107px;height:44px;background:#ffff99"></div>
<div class="t" style="left:1420px;top:595.5px;width:107px;text-align:center;font-size:11.7px;transform:translateY(0.4px) scaleY(1.12);transform-origin:50% 60%;color:#333">28.50</div>
<div class="a" style="left:1529px;top:580px;width:378px;height:44px;background:#ffff99"></div>
<div class="t" style="left:1529px;top:595.5px;width:378px;text-align:center;font-size:11.7px;transform:translateY(0.4px) scaleY(1.12);transform-origin:50% 60%;color:#333">168.90/197.40</div>
<div class="a" style="left:14px;top:626px;width:263px;height:43px;background:#fff"></div>
<div class="t" style="left:14px;top:641.0px;width:263px;text-align:center;font-size:11.7px;transform:translateY(0.4px) scaleY(1.12);transform-origin:50% 60%;color:#333">2025-10-02 18:33:28</div>
<div class="a" style="left:279px;top:626px;width:199px;height:43px;background:#fff"></div>
<div class="t" style="left:279px;top:641.0px;width:199px;text-align:center;font-size:11.7px;transform:translateY(0.4px) scaleY(1.12);transform-origin:50% 60%;color:#333">522858777246</div>
<div class="a" style="left:480px;top:626px;width:228px;height:43px;background:#fff"></div>
<div class="t" style="left:480px;width:127px;text-align:right;top:641.0px;font-size:11.7px;transform:translateY(0.4px) scaleY(1.12);transform-origin:50% 60%;color:#333">652015121</div>
<svg style="left:610px;top:633px" width="30" height="30" viewBox="0 0 30 30"><rect x="0.5" y="0.5" width="29" height="29" rx="4" fill="#fafafa" stroke="#e6e6e6"/><path d="M5 4.9H18.3L24.3 10.6V24.3H5Z" fill="none" stroke="#d2d2d2" stroke-width="1"/><path d="M18.3 4.9V10.6H24.3" fill="none" stroke="#d2d2d2" stroke-width="1"/><path d="M8.3 12.3L11.8 13.2V11.3H18.8V17.3H11.8V15.3L8.3 16.3Z" fill="#c4c4c4"/><circle cx="20" cy="19.5" r="5.4" fill="#fafafa" stroke="#cfcfcf" stroke-width="0.9"/><g fill="#c8c8c8"><circle cx="17.5" cy="17" r="1.15"/><circle cx="20.8" cy="16.3" r="1.15"/><circle cx="23.1" cy="19.6" r="1.15"/><circle cx="16.9" cy="21" r="1.15"/><circle cx="20" cy="22.6" r="1.15"/><circle cx="20" cy="19.5" r="0.4"/></g></svg>
<div class="a" style="left:710px;top:626px;width:96px;height:43px;background:#fff"></div>
<div class="t" style="left:710px;top:641.0px;width:96px;text-align:center;font-size:11.7px;transform:translateY(0.4px) scaleY(1.12);transform-origin:50% 60%;color:#333">34-28</div>
<div class="a" style="left:808px;top:626px;width:131px;height:43px;background:#fff"></div>
<div class="t" style="left:808px;top:641.0px;width:131px;text-align:center;font-size:11.7px;color:#333">百家乐</div>
<div class="a" style="left:941px;top:626px;width:82px;height:43px;background:#fff"></div>
<div class="t" style="left:941px;top:641.0px;width:82px;text-align:center;font-size:11.7px;transform:translateY(0.4px) scaleY(1.12);transform-origin:50% 60%;color:#333">AS1</div>
<div class="a" style="left:1025px;top:626px;width:150px;height:43px;background:#fff"></div>
<div class="t" style="left:1025px;top:641.0px;width:150px;text-align:center;font-size:11.7px;transform:translateY(0.4px) scaleY(1.12);transform-origin:50% 60%;color:#333"><span style="color:#0055ff">闲</span>(2) <span style="color:#ff0000">庄</span>(3)</div>
<div class="a" style="left:1177px;top:626px;width:108px;height:43px;background:#fff"></div>
<div class="t" style="left:1177px;top:641.0px;width:108px;text-align:center;font-size:11.7px;transform:translateY(0.4px) scaleY(1.12);transform-origin:50% 60%;color:#0055ff">30.00</div>
<div class="a" style="left:1287px;top:626px;width:131px;height:43px;background:#fff"></div>
<div class="t" style="left:1287px;top:641.0px;width:131px;text-align:center;font-size:11.7px;transform:translateY(0.4px) scaleY(1.12);transform-origin:50% 60%;color:#333">30.00</div>
<div class="a" style="left:1420px;top:626px;width:107px;height:43px;background:#fff"></div>
<div class="t" style="left:1420px;top:641.0px;width:107px;text-align:center;font-size:11.7px;transform:translateY(0.4px) scaleY(1.12);transform-origin:50% 60%;color:#ff0000">-30.00</div>
<div class="a" style="left:1529px;top:626px;width:378px;height:43px;background:#fff"></div>
<div class="t" style="left:1529px;top:641.0px;width:378px;text-align:center;font-size:11.7px;transform:translateY(0.4px) scaleY(1.12);transform-origin:50% 60%;color:#333">198.90/168.90</div>
<div class="a" style="left:14px;top:671px;width:263px;height:43px;background:#fff"></div>
<div class="t" style="left:14px;top:686.0px;width:263px;text-align:center;font-size:11.7px;transform:translateY(0.4px) scaleY(1.12);transform-origin:50% 60%;color:#333">2025-10-02 18:32:56</div>
<div class="a" style="left:279px;top:671px;width:199px;height:43px;background:#fff"></div>
<div class="t" style="left:279px;top:686.0px;width:199px;text-align:center;font-size:11.7px;transform:translateY(0.4px) scaleY(1.12);transform-origin:50% 60%;color:#333">522858776628</div>
<div class="a" style="left:480px;top:671px;width:228px;height:43px;background:#fff"></div>
<div class="t" style="left:480px;width:127px;text-align:right;top:686.0px;font-size:11.7px;transform:translateY(0.4px) scaleY(1.12);transform-origin:50% 60%;color:#333">652015047</div>
<svg style="left:610px;top:678px" width="30" height="30" viewBox="0 0 30 30"><rect x="0.5" y="0.5" width="29" height="29" rx="4" fill="#fafafa" stroke="#e6e6e6"/><path d="M5 4.9H18.3L24.3 10.6V24.3H5Z" fill="none" stroke="#d2d2d2" stroke-width="1"/><path d="M18.3 4.9V10.6H24.3" fill="none" stroke="#d2d2d2" stroke-width="1"/><path d="M8.3 12.3L11.8 13.2V11.3H18.8V17.3H11.8V15.3L8.3 16.3Z" fill="#c4c4c4"/><circle cx="20" cy="19.5" r="5.4" fill="#fafafa" stroke="#cfcfcf" stroke-width="0.9"/><g fill="#c8c8c8"><circle cx="17.5" cy="17" r="1.15"/><circle cx="20.8" cy="16.3" r="1.15"/><circle cx="23.1" cy="19.6" r="1.15"/><circle cx="16.9" cy="21" r="1.15"/><circle cx="20" cy="22.6" r="1.15"/><circle cx="20" cy="19.5" r="0.4"/></g></svg>
<div class="a" style="left:710px;top:671px;width:96px;height:43px;background:#fff"></div>
<div class="t" style="left:710px;top:686.0px;width:96px;text-align:center;font-size:11.7px;transform:translateY(0.4px) scaleY(1.12);transform-origin:50% 60%;color:#333">34-27</div>
<div class="a" style="left:808px;top:671px;width:131px;height:43px;background:#fff"></div>
<div class="t" style="left:808px;top:686.0px;width:131px;text-align:center;font-size:11.7px;color:#333">百家乐</div>
<div class="a" style="left:941px;top:671px;width:82px;height:43px;background:#fff"></div>
<div class="t" style="left:941px;top:686.0px;width:82px;text-align:center;font-size:11.7px;transform:translateY(0.4px) scaleY(1.12);transform-origin:50% 60%;color:#333">AS1</div>
<div class="a" style="left:1025px;top:671px;width:150px;height:43px;background:#fff"></div>
<div class="t" style="left:1025px;top:686.0px;width:150px;text-align:center;font-size:11.7px;transform:translateY(0.4px) scaleY(1.12);transform-origin:50% 60%;color:#333"><span style="color:#0055ff">闲</span>(6) <span style="color:#ff0000">庄</span>(9)</div>
<div class="a" style="left:1177px;top:671px;width:108px;height:43px;background:#fff"></div>
<div class="t" style="left:1177px;top:686.0px;width:108px;text-align:center;font-size:11.7px;transform:translateY(0.4px) scaleY(1.12);transform-origin:50% 60%;color:#0055ff">30.00</div>
<div class="a" style="left:1287px;top:671px;width:131px;height:43px;background:#fff"></div>
<div class="t" style="left:1287px;top:686.0px;width:131px;text-align:center;font-size:11.7px;transform:translateY(0.4px) scaleY(1.12);transform-origin:50% 60%;color:#333">30.00</div>
<div class="a" style="left:1420px;top:671px;width:107px;height:43px;background:#fff"></div>
<div class="t" style="left:1420px;top:686.0px;width:107px;text-align:center;font-size:11.7px;transform:translateY(0.4px) scaleY(1.12);transform-origin:50% 60%;color:#333">28.50</div>
<div class="a" style="left:1529px;top:671px;width:378px;height:43px;background:#fff"></div>
<div class="t" style="left:1529px;top:686.0px;width:378px;text-align:center;font-size:11.7px;transform:translateY(0.4px) scaleY(1.12);transform-origin:50% 60%;color:#333">170.40/198.90</div>
<div class="a" style="left:14px;top:716px;width:263px;height:44px;background:#fff"></div>
<div class="t" style="left:14px;top:731.5px;width:263px;text-align:center;font-size:11.7px;transform:translateY(0.4px) scaleY(1.12);transform-origin:50% 60%;color:#333">2025-10-02 18:32:32</div>
<div class="a" style="left:279px;top:716px;width:199px;height:44px;background:#fff"></div>
<div class="t" style="left:279px;top:731.5px;width:199px;text-align:center;font-size:11.7px;transform:translateY(0.4px) scaleY(1.12);transform-origin:50% 60%;color:#333">522858776209</div>
<div class="a" style="left:480px;top:716px;width:228px;height:44px;background:#fff"></div>
<div class="t" style="left:480px;width:127px;text-align:right;top:731.5px;font-size:11.7px;transform:translateY(0.4px) scaleY(1.12);transform-origin:50% 60%;color:#333">652014971</div>
<svg style="left:610px;top:723px" width="30" height="30" viewBox="0 0 30 30"><rect x="0.5" y="0.5" width="29" height="29" rx="4" fill="#fafafa" stroke="#e6e6e6"/><path d="M5 4.9H18.3L24.3 10.6V24.3H5Z" fill="none" stroke="#d2d2d2" stroke-width="1"/><path d="M18.3 4.9V10.6H24.3" fill="none" stroke="#d2d2d2" stroke-width="1"/><path d="M8.3 12.3L11.8 13.2V11.3H18.8V17.3H11.8V15.3L8.3 16.3Z" fill="#c4c4c4"/><circle cx="20" cy="19.5" r="5.4" fill="#fafafa" stroke="#cfcfcf" stroke-width="0.9"/><g fill="#c8c8c8"><circle cx="17.5" cy="17" r="1.15"/><circle cx="20.8" cy="16.3" r="1.15"/><circle cx="23.1" cy="19.6" r="1.15"/><circle cx="16.9" cy="21" r="1.15"/><circle cx="20" cy="22.6" r="1.15"/><circle cx="20" cy="19.5" r="0.4"/></g></svg>
<div class="a" style="left:710px;top:716px;width:96px;height:44px;background:#fff"></div>
<div class="t" style="left:710px;top:731.5px;width:96px;text-align:center;font-size:11.7px;transform:translateY(0.4px) scaleY(1.12);transform-origin:50% 60%;color:#333">34-26</div>
<div class="a" style="left:808px;top:716px;width:131px;height:44px;background:#fff"></div>
<div class="t" style="left:808px;top:731.5px;width:131px;text-align:center;font-size:11.7px;color:#333">百家乐</div>
<div class="a" style="left:941px;top:716px;width:82px;height:44px;background:#fff"></div>
<div class="t" style="left:941px;top:731.5px;width:82px;text-align:center;font-size:11.7px;transform:translateY(0.4px) scaleY(1.12);transform-origin:50% 60%;color:#333">AS1</div>
<div class="a" style="left:1025px;top:716px;width:150px;height:44px;background:#fff"></div>
<div class="t" style="left:1025px;top:731.5px;width:150px;text-align:center;font-size:11.7px;transform:translateY(0.4px) scaleY(1.12);transform-origin:50% 60%;color:#333"><span style="color:#0055ff">闲</span>(9) <span style="color:#ff0000">庄</span>(3)</div>
<div class="a" style="left:1177px;top:716px;width:108px;height:44px;background:#fff"></div>
<div class="t" style="left:1177px;top:731.5px;width:108px;text-align:center;font-size:11.7px;transform:translateY(0.4px) scaleY(1.12);transform-origin:50% 60%;color:#0055ff">30.00</div>
<div class="a" style="left:1287px;top:716px;width:131px;height:44px;background:#fff"></div>
<div class="t" style="left:1287px;top:731.5px;width:131px;text-align:center;font-size:11.7px;transform:translateY(0.4px) scaleY(1.12);transform-origin:50% 60%;color:#333">30.00</div>
<div class="a" style="left:1420px;top:716px;width:107px;height:44px;background:#fff"></div>
<div class="t" style="left:1420px;top:731.5px;width:107px;text-align:center;font-size:11.7px;transform:translateY(0.4px) scaleY(1.12);transform-origin:50% 60%;color:#ff0000">-30.00</div>
<div class="a" style="left:1529px;top:716px;width:378px;height:44px;background:#fff"></div>
<div class="t" style="left:1529px;top:731.5px;width:378px;text-align:center;font-size:11.7px;transform:translateY(0.4px) scaleY(1.12);transform-origin:50% 60%;color:#333">200.40/170.40</div>
<div class="a" style="left:13px;top:760px;width:1895px;height:62px;border-radius:0 0 4px 4px;background:#e6e6e6;box-shadow:0 1px 2px rgba(0,0,0,0.15)"></div>
<div class="a" style="left:13px;top:760px;width:264px;height:30px;background:#999;"></div>
<div class="t" style="left:14px;top:767.5px;width:263px;text-align:center;font-size:11.7px;font-weight:normal;color:#fff">小计</div>
<div class="a" style="left:279px;top:760px;width:199px;height:30px;background:#999;"></div>
<div class="t" style="left:279px;top:767.5px;width:199px;text-align:center;font-size:11.7px;font-weight:bold;color:#fff">8</div>
<div class="a" style="left:480px;top:760px;width:228px;height:30px;background:#999;"></div>
<div class="a" style="left:710px;top:760px;width:96px;height:30px;background:#999;"></div>
<div class="a" style="left:808px;top:760px;width:131px;height:30px;background:#999;"></div>
<div class="a" style="left:941px;top:760px;width:82px;height:30px;background:#999;"></div>
<div class="a" style="left:1025px;top:760px;width:150px;height:30px;background:#999;"></div>
<div class="a" style="left:1177px;top:760px;width:108px;height:30px;background:#999;"></div>
<div class="t" style="left:1177px;top:767.5px;width:108px;text-align:center;font-size:11.7px;font-weight:bold;color:#fff">240.00</div>
<div class="a" style="left:1287px;top:760px;width:131px;height:30px;background:#999;"></div>
<div class="t" style="left:1287px;top:767.5px;width:131px;text-align:center;font-size:11.7px;font-weight:bold;color:#fff">240.00</div>
<div class="a" style="left:1420px;top:760px;width:107px;height:30px;background:#999;"></div>
<div class="t" style="left:1420px;top:767.5px;width:107px;text-align:center;font-size:11.7px;font-weight:bold;color:#fff">52.50</div>
<div class="a" style="left:1529px;top:760px;width:379px;height:30px;background:#999;"></div>
<div class="a" style="left:13px;top:792px;width:264px;height:30px;background:#999;border-bottom-left-radius:4px;"></div>
<div class="t" style="left:14px;top:799.5px;width:263px;text-align:center;font-size:11.7px;font-weight:normal;color:#fff">总计</div>
<div class="a" style="left:279px;top:792px;width:199px;height:30px;background:#999;"></div>
<div class="t" style="left:279px;top:799.5px;width:199px;text-align:center;font-size:11.7px;font-weight:bold;color:#fff">8</div>
<div class="a" style="left:480px;top:792px;width:228px;height:30px;background:#999;"></div>
<div class="a" style="left:710px;top:792px;width:96px;height:30px;background:#999;"></div>
<div class="a" style="left:808px;top:792px;width:131px;height:30px;background:#999;"></div>
<div class="a" style="left:941px;top:792px;width:82px;height:30px;background:#999;"></div>
<div class="a" style="left:1025px;top:792px;width:150px;height:30px;background:#999;"></div>
<div class="a" style="left:1177px;top:792px;width:108px;height:30px;background:#999;"></div>
<div class="t" style="left:1177px;top:799.5px;width:108px;text-align:center;font-size:11.7px;font-weight:bold;color:#fff">240.00</div>
<div class="a" style="left:1287px;top:792px;width:131px;height:30px;background:#999;"></div>
<div class="t" style="left:1287px;top:799.5px;width:131px;text-align:center;font-size:11.7px;font-weight:bold;color:#fff">240.00</div>
<div class="a" style="left:1420px;top:792px;width:107px;height:30px;background:#999;"></div>
<div class="t" style="left:1420px;top:799.5px;width:107px;text-align:center;font-size:11.7px;font-weight:bold;color:#fff">52.50</div>
<div class="a" style="left:1529px;top:792px;width:379px;height:30px;background:#999;border-bottom-right-radius:4px;"></div></body></html>
